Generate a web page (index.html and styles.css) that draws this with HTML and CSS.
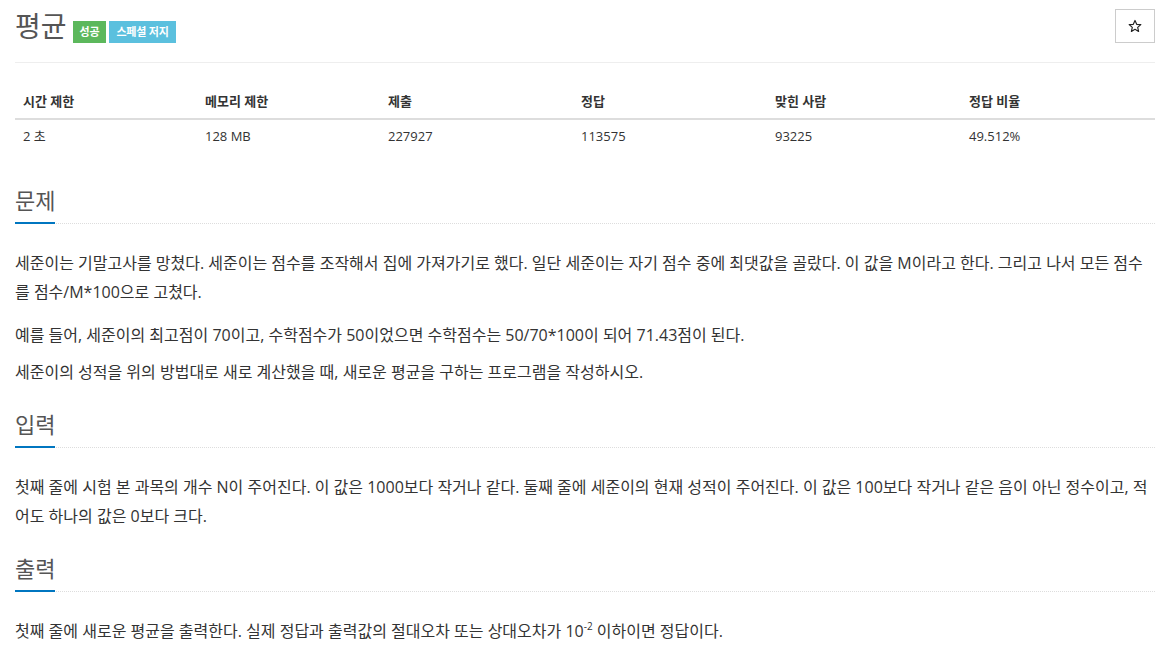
FILE: index.html
```html
<!DOCTYPE html>
<html lang="ko">
<head>
<meta charset="utf-8">
<title>평균</title>
<link rel="stylesheet" href="styles.css">
</head>
<body>
<div class="container">
  <div class="page-header">
    <div class="title-group">
      <h1 class="title">평균</h1>
      <span class="label label-success">성공</span>
      <span class="label label-info">스페셜 저지</span>
    </div>
    <button class="star-btn" type="button" aria-label="즐겨찾기">
      <svg width="14" height="14" viewBox="0 0 24 24"><path d="M12 2.5l2.9 6.6 7.1.6-5.4 4.7 1.6 7-6.2-3.7-6.2 3.7 1.6-7L2 9.7l7.1-.6z" fill="none" stroke="#222" stroke-width="2" stroke-linejoin="round"/></svg>
    </button>
  </div>

  <table class="info-table">
    <thead>
      <tr>
        <th class="c1">시간 제한</th>
        <th class="c2">메모리 제한</th>
        <th class="c3">제출</th>
        <th class="c4">정답</th>
        <th class="c5">맞힌 사람</th>
        <th class="c6">정답 비율</th>
      </tr>
    </thead>
    <tbody>
      <tr>
        <td>2 초</td>
        <td>128 MB</td>
        <td>227927</td>
        <td>113575</td>
        <td>93225</td>
        <td>49.512%</td>
      </tr>
    </tbody>
  </table>

  <section class="problem-section first">
    <div class="headline"><h2>문제</h2></div>
    <div class="problem-text">
      <p class="p-wide">세준이는 기말고사를 망쳤다. 세준이는 점수를 조작해서 집에 가져가기로 했다. 일단 세준이는 자기 점수 중에 최댓값을 골랐다. 이 값을 M이라고 한다. 그리고 나서 모든 점수를 점수/M*100으로 고쳤다.</p>
      <p>예를 들어, 세준이의 최고점이 70이고, 수학점수가 50이었으면 수학점수는 50/70*100이 되어 71.43점이 된다.</p>
      <p>세준이의 성적을 위의 방법대로 새로 계산했을 때, 새로운 평균을 구하는 프로그램을 작성하시오.</p>
    </div>
  </section>

  <section class="problem-section">
    <div class="headline"><h2>입력</h2></div>
    <div class="problem-text">
      <p>첫째 줄에 시험 본 과목의 개수 N이 주어진다. 이 값은 1000보다 작거나 같다. 둘째 줄에 세준이의 현재 성적이 주어진다. 이 값은 100보다 작거나 같은 음이 아닌 정수이고, 적어도 하나의 값은 0보다 크다.</p>
    </div>
  </section>

  <section class="problem-section">
    <div class="headline"><h2>출력</h2></div>
    <div class="problem-text">
      <p>첫째 줄에 새로운 평균을 출력한다. 실제 정답과 출력값의 절대오차 또는 상대오차가 10<sup>-2</sup> 이하이면 정답이다.</p>
    </div>
  </section>
</div>
</body>
</html>
```

FILE: styles.css
```css
* {
  box-sizing: border-box;
}

html, body {
  margin: 0;
  padding: 0;
  background: #fff;
}

body {
  font-family: "Open Sans", "Noto Sans CJK KR", sans-serif;
  color: #333;
  font-size: 13px;
}

.container {
  width: 1140px;
  margin-left: 15px;
}

.page-header {
  display: flex;
  justify-content: space-between;
  align-items: flex-start;
  padding-top: 9px;
  height: 63px;
  border-bottom: 1px solid #eee;
}

.title-group {
  display: flex;
  align-items: flex-start;
  height: 34px;
}

.title {
  margin: 2px 6px 0 0;
  font-size: 28px;
  font-weight: 400;
  line-height: 30px;
  color: #555;
}

.label {
  display: inline-block;
  height: 22px;
  line-height: 22px;
  padding: 0 7px;
  font-size: 11px;
  font-weight: 700;
  color: #fff;
  margin-right: 3px;
  margin-top: 12px;
  letter-spacing: -0.2px;
}

.label-success {
  background: #5cb85c;
}

.label-info {
  background: #5bc0de;
}

.star-btn {
  width: 40px;
  height: 34px;
  border: 1px solid #ccc;
  background: #fff;
  border-radius: 0;
  padding: 0;
  display: flex;
  align-items: center;
  justify-content: center;
}

.info-table {
  width: 1140px;
  border-collapse: collapse;
  margin-top: 21px;
  table-layout: fixed;
}

.info-table th,
.info-table td {
  text-align: left;
  padding: 8px;
  line-height: 18px;
  font-size: 13px;
}

.info-table td {
  padding-top: 7px;
}

.info-table th {
  font-weight: 700;
  border-bottom: 2px solid #ddd;
}

.c1 { width: 182px; }
.c2 { width: 183px; }
.c3 { width: 193px; }
.c4 { width: 194px; }
.c5 { width: 194px; }
.c6 { width: 194px; }

.headline {
  border-bottom: 1px dotted #ddd;
  margin-top: 25px;
  margin-bottom: 25px;
  height: 36px;
}

.problem-section.first .headline {
  margin-top: 35px;
}

.headline h2 {
  display: inline-block;
  margin: 0;
  height: 36px;
  font-size: 22px;
  font-weight: 400;
  line-height: 24px;
  color: #555;
  padding-bottom: 10px;
  border-bottom: 2px solid #0076c0;
}

.problem-text p {
  margin: 0 0 8px;
  font-size: 16px;
  line-height: 29px;
  color: #333;
}

.problem-text p.p-wide {
  margin-bottom: 14px;
}

.problem-text sup {
  font-size: 10px;
  line-height: 0;
  vertical-align: 7px;
}
```
